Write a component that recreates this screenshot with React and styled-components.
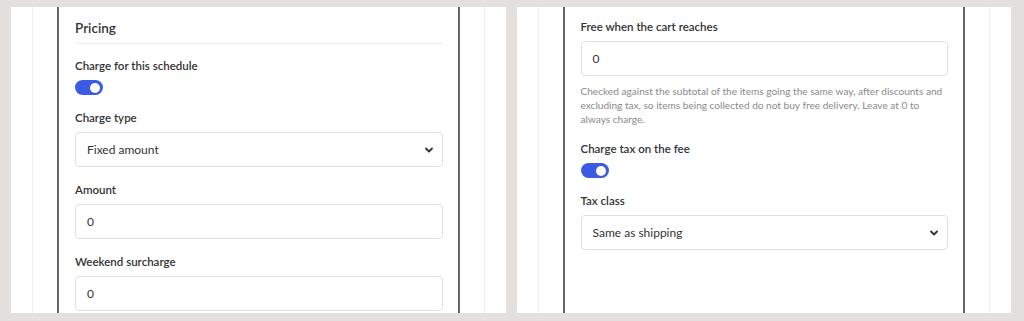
import React from "react";
import styled, { createGlobalStyle } from "styled-components";

const GlobalStyle = createGlobalStyle`
  html, body {
    margin: 0;
    padding: 0;
    background: #e4e0de;
  }
  body {
    font-family: Lato, "Open Sans", Arial, sans-serif;
    color: #333;
  }
`;

const Chevron = () => (
  <svg width="10" height="10" viewBox="0 0 10 10">
    <path d="M2 3.5l3 3 3-3" fill="none" stroke="#333" strokeWidth="1.8" strokeLinecap="round" strokeLinejoin="round" />
  </svg>
);

const Toggle = () => (
  <ToggleTrack role="switch" aria-checked="true">
    <ToggleKnob />
  </ToggleTrack>
);

const Field = ({ label, children }) => (
  <FieldWrap>
    <Label>{label}</Label>
    {children}
  </FieldWrap>
);

const SelectField = ({ label, value }) => (
  <Field label={label}>
    <SelectBox>
      <span>{value}</span>
      <Chevron />
    </SelectBox>
  </Field>
);

const InputField = ({ label, value }) => (
  <Field label={label}>
    <InputBox>{value}</InputBox>
  </Field>
);

const ToggleField = ({ label }) => (
  <Field label={label}>
    <Toggle />
  </Field>
);

const Preview = ({ top, children }) => (
  <Panel>
    <Frame>
      <Column $top={top}>{children}</Column>
    </Frame>
  </Panel>
);

export default function App() {
  return (
    <Page>
      <GlobalStyle />
      <Preview top={11}>
        <SectionTitle>Pricing</SectionTitle>
        <ToggleField label="Charge for this schedule" />
        <SelectField label="Charge type" value="Fixed amount" />
        <InputField label="Amount" value="0" />
        <InputField label="Weekend surcharge" value="0" />
      </Preview>
      <Preview top={12}>
        <FieldWrap>
          <Label>Free when the cart reaches</Label>
          <InputBox>0</InputBox>
          <Help>
            Checked against the subtotal of the items going the same way, after
            discounts and excluding tax, so items being collected do not buy free
            delivery. Leave at 0 to always charge.
          </Help>
        </FieldWrap>
        <ToggleField label="Charge tax on the fee" />
        <SelectField label="Tax class" value="Same as shipping" />
      </Preview>
    </Page>
  );
}

const Page = styled.div`
  display: flex;
  gap: 11px;
  height: 321px;
  box-sizing: border-box;
  padding: 7px 13px 8px 11px;
`;

const Panel = styled.div`
  flex: 1;
  min-width: 0;
  background: #fff;
  padding: 0 21px;
  display: flex;
  overflow: hidden;
`;

const Frame = styled.div`
  flex: 1;
  display: flex;
  border-left: 1px solid #efefef;
  border-right: 1px solid #efefef;
  padding: 0 24px;
`;

const Column = styled.div`
  flex: 1;
  border-left: 2px solid #666;
  border-right: 2px solid #666;
  padding: ${(p) => p.$top}px 15px 0 16px;
  display: flex;
  flex-direction: column;
  gap: 15px;
  overflow: hidden;
`;

const SectionTitle = styled.h2`
  margin: 0 0 -1px;
  font-size: 13.5px;
  line-height: 20px;
  font-weight: 600;
  color: #333;
  padding-bottom: 5px;
  border-bottom: 1px solid #ececec;
`;

const FieldWrap = styled.div`
  display: flex;
  flex-direction: column;
  align-items: flex-start;
  gap: 6px;
`;

const Label = styled.div`
  font-size: 11.5px;
  line-height: 16px;
  font-weight: 600;
  color: #333;
`;

const InputBox = styled.div`
  align-self: stretch;
  box-sizing: border-box;
  height: 35px;
  border: 1px solid #e0e0e0;
  border-radius: 4px;
  padding: 0 11px;
  display: flex;
  align-items: center;
  font-size: 12px;
  color: #333;
`;

const SelectBox = styled(InputBox)`
  justify-content: space-between;
  padding-right: 8px;
`;

const ToggleTrack = styled.div`
  width: 28px;
  height: 15px;
  border-radius: 8px;
  background: #3c5be4;
  position: relative;
`;

const ToggleKnob = styled.span`
  position: absolute;
  top: 2.5px;
  right: 3px;
  width: 10px;
  height: 10px;
  border-radius: 50%;
  background: #fff;
`;

const Help = styled.p`
  margin: 2px 0 0;
  font-size: 10.1px;
  line-height: 14px;
  color: #8a8a8a;
`;
